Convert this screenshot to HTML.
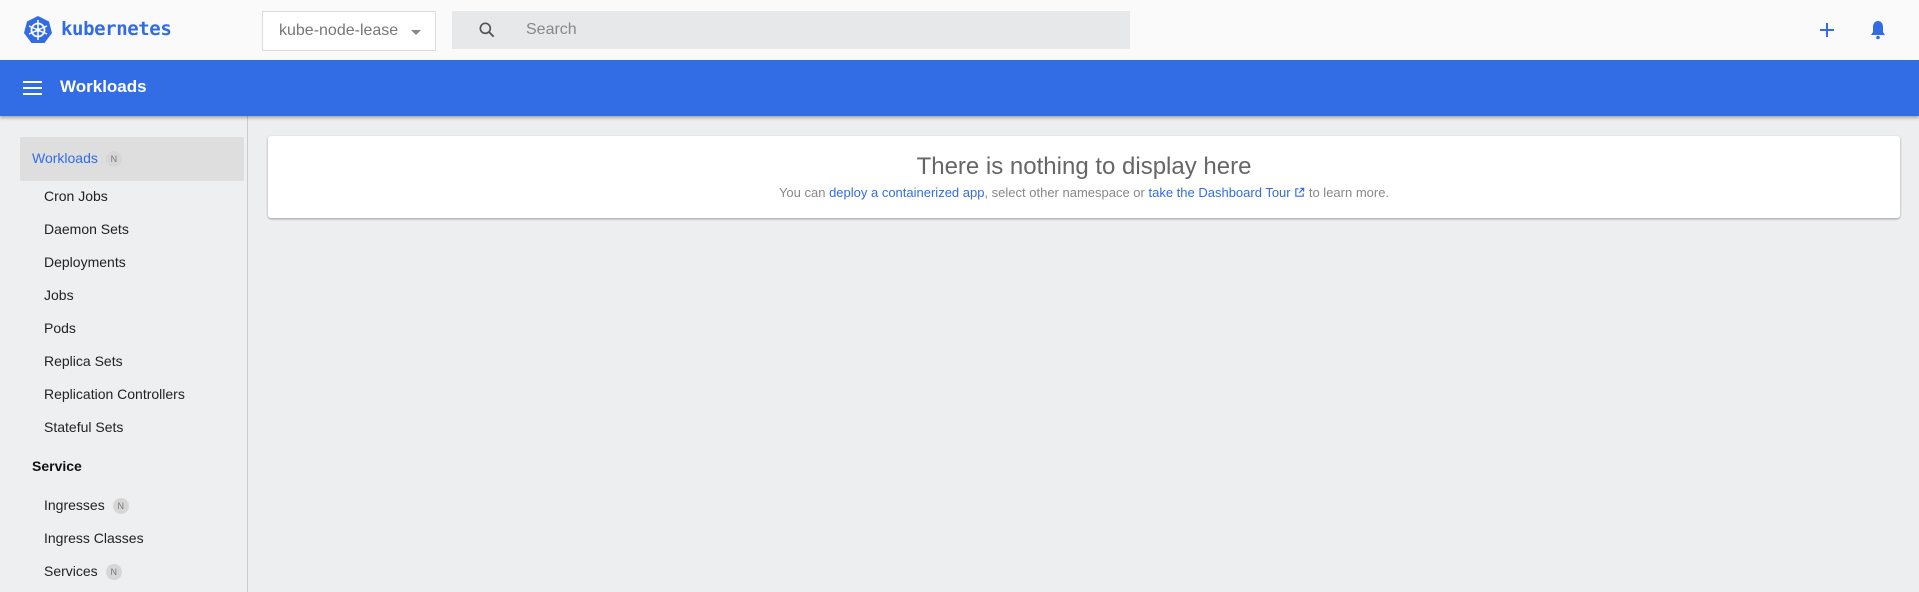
<!DOCTYPE html>
<html><head><meta charset="utf-8"><style>
*{box-sizing:border-box;margin:0;padding:0}
body{width:1919px;height:592px;overflow:hidden;background:#edeef0;font-family:"Liberation Sans",sans-serif;position:relative}
.top{position:absolute;left:0;top:0;width:1919px;height:60px;background:#fafafa}
.logo{position:absolute;left:23px;top:15px}
.brand{position:absolute;left:61px;top:18px;font-family:"DejaVu Sans Mono","Liberation Mono",monospace;font-weight:bold;font-size:19px;color:#326ce5;letter-spacing:-0.4px}
.ns{position:absolute;left:262px;top:11px;width:174px;height:40px;border:1px solid #ddd;background:#fff;color:#777;font-size:16px;padding:10px 0 0 16px}
.ns:after{content:"";position:absolute;right:14px;top:18px;border:5px solid transparent;border-top-color:#888}
.search{position:absolute;left:452px;top:11px;width:678px;height:38px;background:#e6e8ea;color:#888;font-size:16px}
.search span{position:absolute;left:74px;top:10px}
.bar{position:absolute;left:0;top:60px;width:1919px;height:56px;background:#326de6;box-shadow:0 2px 3px rgba(0,0,0,.3);z-index:2}
.bar .t{position:absolute;left:60px;top:17px;color:#fff;font-size:17px;font-weight:bold}
.side{position:absolute;left:0;top:116px;width:248px;height:476px;border-right:1px solid #ccc;background:#eeeff1}
.it{position:absolute;left:44px;font-size:14px;color:#222}
.hd{position:absolute;left:32px;font-size:14px;color:#111;font-weight:bold}
.n{display:inline-block;width:16px;height:16px;border-radius:8px;background:#d6d6d6;color:#777;font-size:9px;text-align:center;line-height:16px;margin-left:8px;vertical-align:1px}
.card{position:absolute;left:268px;top:136px;width:1632px;height:82px;background:#fff;border-radius:3px;box-shadow:0 1px 2px rgba(0,0,0,.35);text-align:center}
.card h1{font-weight:normal;font-size:24px;color:#666;margin-top:17px}
.card p{font-size:13px;color:#888;margin-top:4px}
.card a{color:#326ce5;text-decoration:none}
</style></head><body>
<div class="top">
<svg class="logo" width="30" height="30" viewBox="0 0 30 30"><polygon points="15,1 26,6.5 29,18 21.5,28 8.5,28 1,18 4,6.5" fill="#326ce5"/><circle cx="15" cy="15" r="6.5" fill="none" stroke="#fff" stroke-width="1.8"/><g stroke="#fff" stroke-width="1.5"><line x1="15" y1="5" x2="15" y2="25"/><line x1="6" y1="11" x2="24" y2="19"/><line x1="24" y1="11" x2="6" y2="19"/></g><circle cx="15" cy="15" r="2" fill="#fff"/></svg>
<div class="brand">kubernetes</div>
<div class="ns">kube-node-lease</div>
<div class="search"><svg style="position:absolute;left:25px;top:9px" width="20" height="20" viewBox="0 0 24 24"><circle cx="10" cy="10" r="6" fill="none" stroke="#555" stroke-width="2"/><line x1="14.5" y1="14.5" x2="20" y2="20" stroke="#555" stroke-width="2.2"/></svg><span>Search</span></div>
<svg style="position:absolute;left:1818px;top:21px" width="18" height="18" viewBox="0 0 18 18"><path d="M9 2v14M2 9h14" stroke="#326ce5" stroke-width="2"/></svg>
<svg style="position:absolute;left:1869px;top:19px" width="18" height="22" viewBox="0 0 18 22"><path d="M9 2c-3 0-5 2.5-5 6v5l-2 3h14l-2-3V8c0-3.5-2-6-5-6z" fill="#326ce5"/><circle cx="9" cy="18.5" r="1.8" fill="#326ce5"/></svg>
</div>
<div class="bar"><svg style="position:absolute;left:23px;top:21px" width="19" height="14"><rect y="0" width="19" height="2" fill="#fff"/><rect y="6" width="19" height="2" fill="#fff"/><rect y="12" width="19" height="2" fill="#fff"/></svg><div class="t">Workloads</div></div>
<div class="side">
<div style="position:absolute;left:20px;top:21px;width:224px;height:44px;background:#dedede;border-radius:2px"></div>
<div class="it" style="left:32px;top:34px;color:#326ce5">Workloads<span class="n">N</span></div>
<div class="it" style="top:72px">Cron Jobs</div>
<div class="it" style="top:105px">Daemon Sets</div>
<div class="it" style="top:138px">Deployments</div>
<div class="it" style="top:171px">Jobs</div>
<div class="it" style="top:204px">Pods</div>
<div class="it" style="top:237px">Replica Sets</div>
<div class="it" style="top:270px">Replication Controllers</div>
<div class="it" style="top:303px">Stateful Sets</div>
<div class="hd" style="top:342px">Service</div>
<div class="it" style="top:381px">Ingresses<span class="n">N</span></div>
<div class="it" style="top:414px">Ingress Classes</div>
<div class="it" style="top:447px">Services<span class="n">N</span></div>
</div>
<div class="card"><h1>There is nothing to display here</h1><p>You can <a>deploy a containerized app</a>, select other namespace or <a>take the Dashboard Tour <svg width="11" height="11" viewBox="0 0 12 12" style="vertical-align:-1px"><path d="M5 2H2v8h8V7M7 1.5h3.5V5M10.5 1.5L5.5 6.5" fill="none" stroke="#326ce5" stroke-width="1.3"/></svg></a> to learn more.</p></div>
</body></html>
